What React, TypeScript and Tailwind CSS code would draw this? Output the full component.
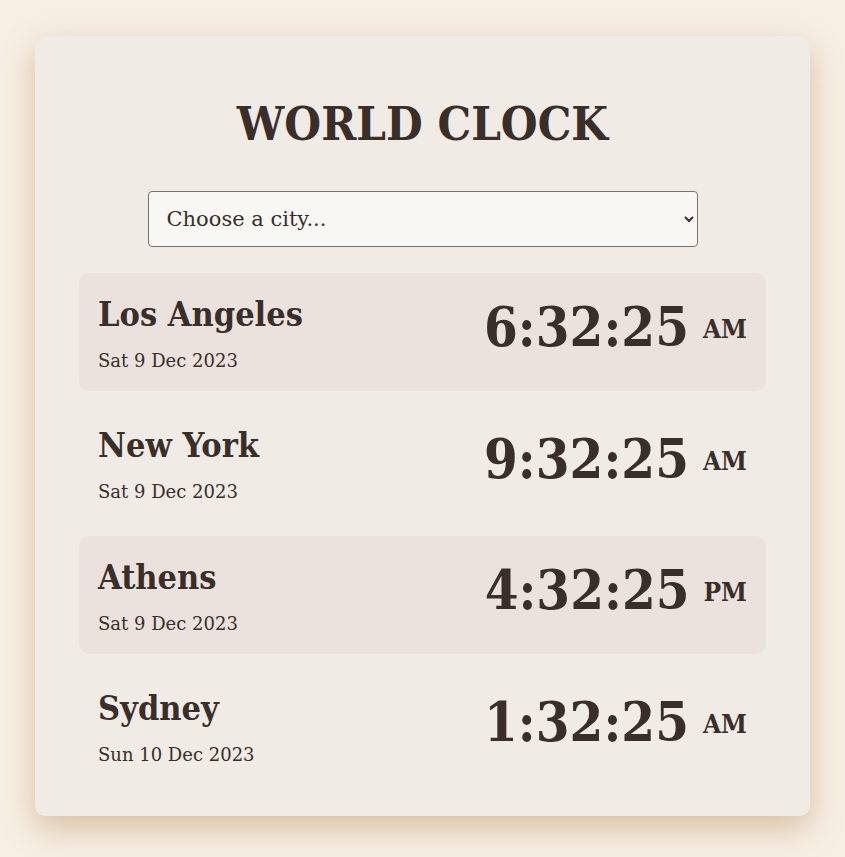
const cities = [
  { name: "Los Angeles", date: "Sat 9 Dec 2023", time: "6:32:25", period: "AM" },
  { name: "New York", date: "Sat 9 Dec 2023", time: "9:32:25", period: "AM" },
  { name: "Athens", date: "Sat 9 Dec 2023", time: "4:32:25", period: "PM" },
  { name: "Sydney", date: "Sun 10 Dec 2023", time: "1:32:25", period: "AM" },
];

const condensed = { fontFamily: '"DejaVu Serif Condensed", "DejaVu Serif", serif' };

function CityRow({ city, shaded }: { city: (typeof cities)[number]; shaded: boolean }) {
  return (
    <div
      className={`flex h-[118px] items-center justify-between rounded-[10px] px-[19px] ${
        shaded ? "bg-[#ebe2dd]" : ""
      }`}
    >
      <div className="pt-[2px]">
        <h2 className="font-stretch-condensed text-[34px] font-bold leading-[40px]" style={condensed}>
          {city.name}
        </h2>
        <div className="mt-[15px] text-[18px] leading-[24px]">{city.date}</div>
      </div>
      <div className="font-stretch-condensed pb-[10px] text-[54px] font-bold leading-none" style={condensed}>
        {city.time}
        <span className="ml-[14px] align-[8px] text-[26px]">{city.period}</span>
      </div>
    </div>
  );
}

export default function App() {
  return (
    <div
      className="min-h-screen bg-[#f7efe4] pt-[36px] pb-[41px] text-[#3a2e2a]"
      style={{ fontFamily: '"DejaVu Serif", "Liberation Serif", serif' }}
    >
      <div className="mx-auto w-[775px] rounded-[10px] bg-[#f0ebe5] px-[44px] pt-[58px] pb-[30px] shadow-[0_12px_32px_rgba(170,120,60,0.4)]">
        <h1 className="font-stretch-condensed text-center text-[47px] font-bold leading-[60px]" style={condensed}>
          WORLD CLOCK
        </h1>
        <div className="mt-[37px] flex justify-center">
          <select className="h-[56px] w-[550px] rounded-[4px] border border-[#77726d] bg-[#f9f7f4] px-[14px] text-[21px] text-[#3a2e2a]">
            <option>Choose a city...</option>
          </select>
        </div>
        <div className="mt-[26px] flex flex-col gap-[13.5px]">
          {cities.map((c, i) => (
            <CityRow key={c.name} city={c} shaded={i % 2 === 0} />
          ))}
        </div>
      </div>
    </div>
  );
}
